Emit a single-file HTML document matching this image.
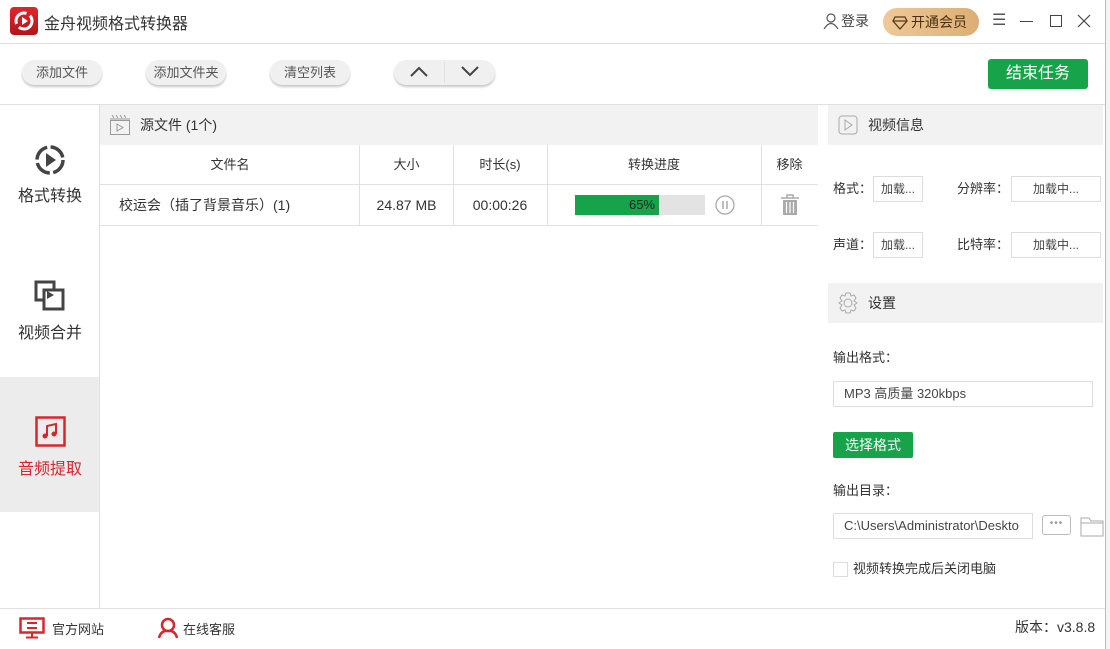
<!DOCTYPE html>
<html><head><meta charset="utf-8"><style>
*{margin:0;padding:0;box-sizing:border-box}
body{width:1110px;height:649px;overflow:hidden;background:#fff;font-family:"Liberation Sans","Noto Sans CJK SC",sans-serif;color:#333;position:relative;font-size:13px}
.a{position:absolute}
.btn{position:absolute;top:60px;height:25px;border-radius:13px;background:#f0f0f0;box-shadow:0 2px 2px #c8c8c8;font-size:13px;color:#555;text-align:center;line-height:25px}
.hd{background:#f2f2f2}
.cell{position:absolute;text-align:center;line-height:40px;font-size:13px;color:#333}
.vl{position:absolute;width:1px;background:#e0e0e0}
.hl{position:absolute;height:1px;background:#e0e0e0}
.box{position:absolute;border:1px solid #ddd;background:#fff;font-size:12px;color:#444;text-align:center;line-height:24px}
.lbl{position:absolute;font-size:13px;color:#333}
</style></head><body>
<div class="a" style="left:10px;top:7px;width:28px;height:28px;border-radius:4px;background:linear-gradient(#e0262c,#b3141a)"></div>
<svg class="a" style="left:10px;top:7px" width="28" height="28"><circle cx="14" cy="14" r="8" fill="none" stroke="#fff" stroke-width="3" stroke-dasharray="18 4"/><path d="M12 10 L18 14 L12 18Z" fill="#fff"/></svg>
<div class="a" style="left:44px;top:10px;font-size:16px;color:#333">金舟视频格式转换器</div>
<svg class="a" style="left:823px;top:13px" width="16" height="16"><circle cx="8" cy="5" r="4" fill="none" stroke="#555" stroke-width="1.2"/><path d="M1 16 Q8 5 15 16" fill="none" stroke="#555" stroke-width="1.2"/></svg>
<div class="a" style="left:841px;top:11px;font-size:14px;color:#444">登录</div>
<div class="a" style="left:883px;top:8px;width:96px;height:28px;border-radius:14px;background:linear-gradient(90deg,#efc99a,#dcae74)"></div>
<svg class="a" style="left:892px;top:14px" width="16" height="16"><path d="M3 3 H13 L15 7 L8 15 L1 7Z M1 7 H15" fill="none" stroke="#5a3b14" stroke-width="1.3"/></svg>
<div class="a" style="left:911px;top:12px;font-size:14px;color:#4a3010">开通会员</div>
<div class="a" style="left:992px;top:10px;font-size:16px;color:#555">☰</div>
<div class="a" style="left:1020px;top:21px;width:13px;height:1px;background:#444"></div>
<div class="a" style="left:1050px;top:15px;width:12px;height:12px;border:1.3px solid #444"></div>
<svg class="a" style="left:1077px;top:14px" width="14" height="14"><path d="M1 1L13 13M13 1L1 13" stroke="#444" stroke-width="1.2"/></svg>
<div class="hl" style="left:0;top:43px;width:1105px"></div>
<div class="btn" style="left:22px;width:80px">添加文件</div>
<div class="btn" style="left:146px;width:80px">添加文件夹</div>
<div class="btn" style="left:270px;width:80px">清空列表</div>
<div class="btn" style="left:394px;width:101px"></div>
<div class="a" style="left:444px;top:62px;width:1px;height:21px;background:#e0e0e0"></div>
<svg class="a" style="left:409px;top:65px" width="20" height="14"><path d="M2 11L10 3L18 11" fill="none" stroke="#444" stroke-width="2"/></svg>
<svg class="a" style="left:460px;top:64px" width="20" height="14"><path d="M2 3L10 11L18 3" fill="none" stroke="#444" stroke-width="2"/></svg>
<div class="a" style="left:988px;top:59px;width:100px;height:30px;background:#16a34a;border-radius:3px;color:#fff;font-size:16px;text-align:center;line-height:30px">结束任务</div>
<div class="hl" style="left:0;top:104px;width:1105px"></div>
<div class="vl" style="left:99px;top:104px;height:504px"></div>
<svg class="a" style="left:34px;top:144px" width="32" height="32"><circle cx="16" cy="16" r="13" fill="none" stroke="#444" stroke-width="3.5" stroke-dasharray="17 3.5"/><path d="M12 9L22 16L12 23Z" fill="#444"/></svg>
<div class="a" style="left:18px;top:182px;font-size:16px;color:#333">格式转换</div>
<svg class="a" style="left:34px;top:280px" width="32" height="32"><rect x="2" y="2" width="18" height="18" fill="none" stroke="#444" stroke-width="3"/><rect x="10" y="10" width="19" height="19" fill="#fff" stroke="#444" stroke-width="3"/><path d="M13 11L20 15L13 19Z" fill="#444"/></svg>
<div class="a" style="left:18px;top:319px;font-size:16px;color:#333">视频合并</div>
<div class="a" style="left:0;top:377px;width:99px;height:135px;background:#ececec"></div>
<svg class="a" style="left:35px;top:416px" width="31" height="31"><rect x="1.5" y="1.5" width="28" height="28" fill="none" stroke="#d9262c" stroke-width="2.5"/><path d="M12 20V10L21 8V18" fill="none" stroke="#d9262c" stroke-width="2"/><circle cx="10" cy="20" r="2.5" fill="#d9262c"/><circle cx="19" cy="18" r="2.5" fill="#d9262c"/></svg>
<div class="a" style="left:18px;top:455px;font-size:16px;color:#d9262c">音频提取</div>
<div class="a hd" style="left:100px;top:105px;width:718px;height:40px"></div>
<svg class="a" style="left:109px;top:114px" width="22" height="22"><path d="M1 5 L21 5 M3 1 L5 4 M7 1 L9 4 M11 1 L13 4 M15 1 L17 4" stroke="#999" stroke-width="1"/><rect x="1.5" y="6.5" width="19" height="14" fill="none" stroke="#999"/><path d="M8 10L14 13.5L8 17Z" fill="none" stroke="#999"/></svg>
<div class="a" style="left:140px;top:115px;font-size:14px;color:#333">源文件 (1个)</div>
<div class="cell" style="left:100px;top:145px;width:260px">文件名</div>
<div class="cell" style="left:360px;top:145px;width:93px">大小</div>
<div class="cell" style="left:453px;top:145px;width:94px">时长(s)</div>
<div class="cell" style="left:547px;top:145px;width:214px">转换进度</div>
<div class="cell" style="left:761px;top:145px;width:57px">移除</div>
<div class="hl" style="left:100px;top:184px;width:718px"></div>
<div class="hl" style="left:100px;top:225px;width:718px"></div>
<div class="vl" style="left:359px;top:145px;height:80px"></div>
<div class="vl" style="left:453px;top:145px;height:80px"></div>
<div class="vl" style="left:547px;top:145px;height:80px"></div>
<div class="vl" style="left:761px;top:145px;height:80px"></div>
<div class="a" style="left:119px;top:195px;font-size:14px;color:#333">校运会（插了背景音乐）(1)</div>
<div class="cell" style="left:360px;top:185px;width:93px;font-size:14px">24.87 MB</div>
<div class="cell" style="left:453px;top:185px;width:94px;font-size:14px">00:00:26</div>
<div class="a" style="left:575px;top:195px;width:130px;height:20px;background:#e3e3e3"></div>
<div class="a" style="left:575px;top:195px;width:84px;height:20px;background:#16a34a;color:#222;font-size:13px;text-align:right;line-height:20px;padding-right:4px">65%</div>
<svg class="a" style="left:715px;top:195px" width="20" height="20"><circle cx="10" cy="10" r="9" fill="none" stroke="#aaa" stroke-width="1.3"/><path d="M8 6V14M12 6V14" stroke="#aaa" stroke-width="1.5"/></svg>
<svg class="a" style="left:780px;top:194px" width="20" height="22"><path d="M1 4H19M7 4V1H13V4" fill="none" stroke="#aaa" stroke-width="1.5"/><rect x="3" y="6" width="14" height="15" fill="#aaa"/><path d="M6.5 8V19M10 8V19M13.5 8V19" stroke="#fff" stroke-width="1.2"/></svg>
<div class="a hd" style="left:828px;top:105px;width:275px;height:40px"></div>
<svg class="a" style="left:838px;top:115px" width="20" height="20"><rect x="1" y="1" width="18" height="18" rx="3" fill="none" stroke="#aaa"/><path d="M7 5L14 10L7 15Z" fill="none" stroke="#aaa"/></svg>
<div class="a" style="left:868px;top:115px;font-size:14px;color:#333">视频信息</div>
<div class="lbl" style="left:833px;top:178px">格式：</div>
<div class="box" style="left:873px;top:176px;width:50px">加载...</div>
<div class="lbl" style="left:957px;top:178px">分辨率：</div>
<div class="box" style="left:1011px;top:176px;width:90px">加载中...</div>
<div class="lbl" style="left:833px;top:234px">声道：</div>
<div class="box" style="left:873px;top:232px;width:50px">加载...</div>
<div class="lbl" style="left:957px;top:234px">比特率：</div>
<div class="box" style="left:1011px;top:232px;width:90px">加载中...</div>
<div class="a hd" style="left:828px;top:283px;width:275px;height:40px"></div>
<svg class="a" style="left:837px;top:292px" width="22" height="22"><circle cx="11" cy="11" r="4" fill="none" stroke="#aaa"/><path d="M9 1H13L14 4L17 3L19 6L17 9L20 11L17 13L19 16L17 19L14 18L13 21H9L8 18L5 19L3 16L5 13L2 11L5 9L3 6L5 3L8 4Z" fill="none" stroke="#aaa"/></svg>
<div class="a" style="left:868px;top:293px;font-size:14px;color:#333">设置</div>
<div class="lbl" style="left:833px;top:347px">输出格式：</div>
<div class="box" style="left:833px;top:381px;width:260px;height:26px;text-align:left;padding-left:10px;font-size:13px">MP3 高质量 320kbps</div>
<div class="a" style="left:833px;top:432px;width:80px;height:26px;background:#16a34a;border-radius:2px;color:#fff;font-size:14px;text-align:center;line-height:26px">选择格式</div>
<div class="lbl" style="left:833px;top:480px">输出目录：</div>
<div class="box" style="left:833px;top:513px;width:200px;height:26px;text-align:left;padding-left:10px;font-size:13px;white-space:nowrap;overflow:hidden">C:\Users\Administrator\Deskto</div>
<div class="a" style="left:1042px;top:515px;width:29px;height:20px;border:1px solid #bbb;border-radius:3px;text-align:center;line-height:16px;color:#999;font-size:10px;letter-spacing:1px">•••</div>
<svg class="a" style="left:1080px;top:515px" width="24" height="22"><path d="M1 3H9L11 6H23V21H1Z M1 8H23" fill="none" stroke="#aaa"/></svg>
<div class="a" style="left:833px;top:562px;width:15px;height:15px;border:1px solid #ddd"></div>
<div class="lbl" style="left:853px;top:558px">视频转换完成后关闭电脑</div>
<div class="hl" style="left:0;top:608px;width:1105px"></div>
<svg class="a" style="left:19px;top:617px" width="26" height="22"><rect x="1.5" y="1.5" width="23" height="14" fill="none" stroke="#d9262c" stroke-width="2.5"/><path d="M8 6H18M8 11H18M13 16V20M7 20.5H19" stroke="#d9262c" stroke-width="2"/></svg>
<div class="a" style="left:52px;top:619px;font-size:13px;color:#333">官方网站</div>
<svg class="a" style="left:157px;top:617px" width="22" height="22"><circle cx="11" cy="8" r="6" fill="none" stroke="#d9262c" stroke-width="2.5"/><path d="M2 21Q4 13 11 14Q18 13 20 21" fill="none" stroke="#d9262c" stroke-width="2.5"/></svg>
<div class="a" style="left:183px;top:619px;font-size:13px;color:#333">在线客服</div>
<div class="a" style="left:1015px;top:617px;font-size:14px;color:#333">版本：v3.8.8</div>
<div class="a" style="left:1105px;top:0;width:1px;height:649px;background:#bbb"></div>
<div class="a" style="left:1106px;top:0;width:4px;height:649px;background:#f4f4f4"></div>
</body></html>
